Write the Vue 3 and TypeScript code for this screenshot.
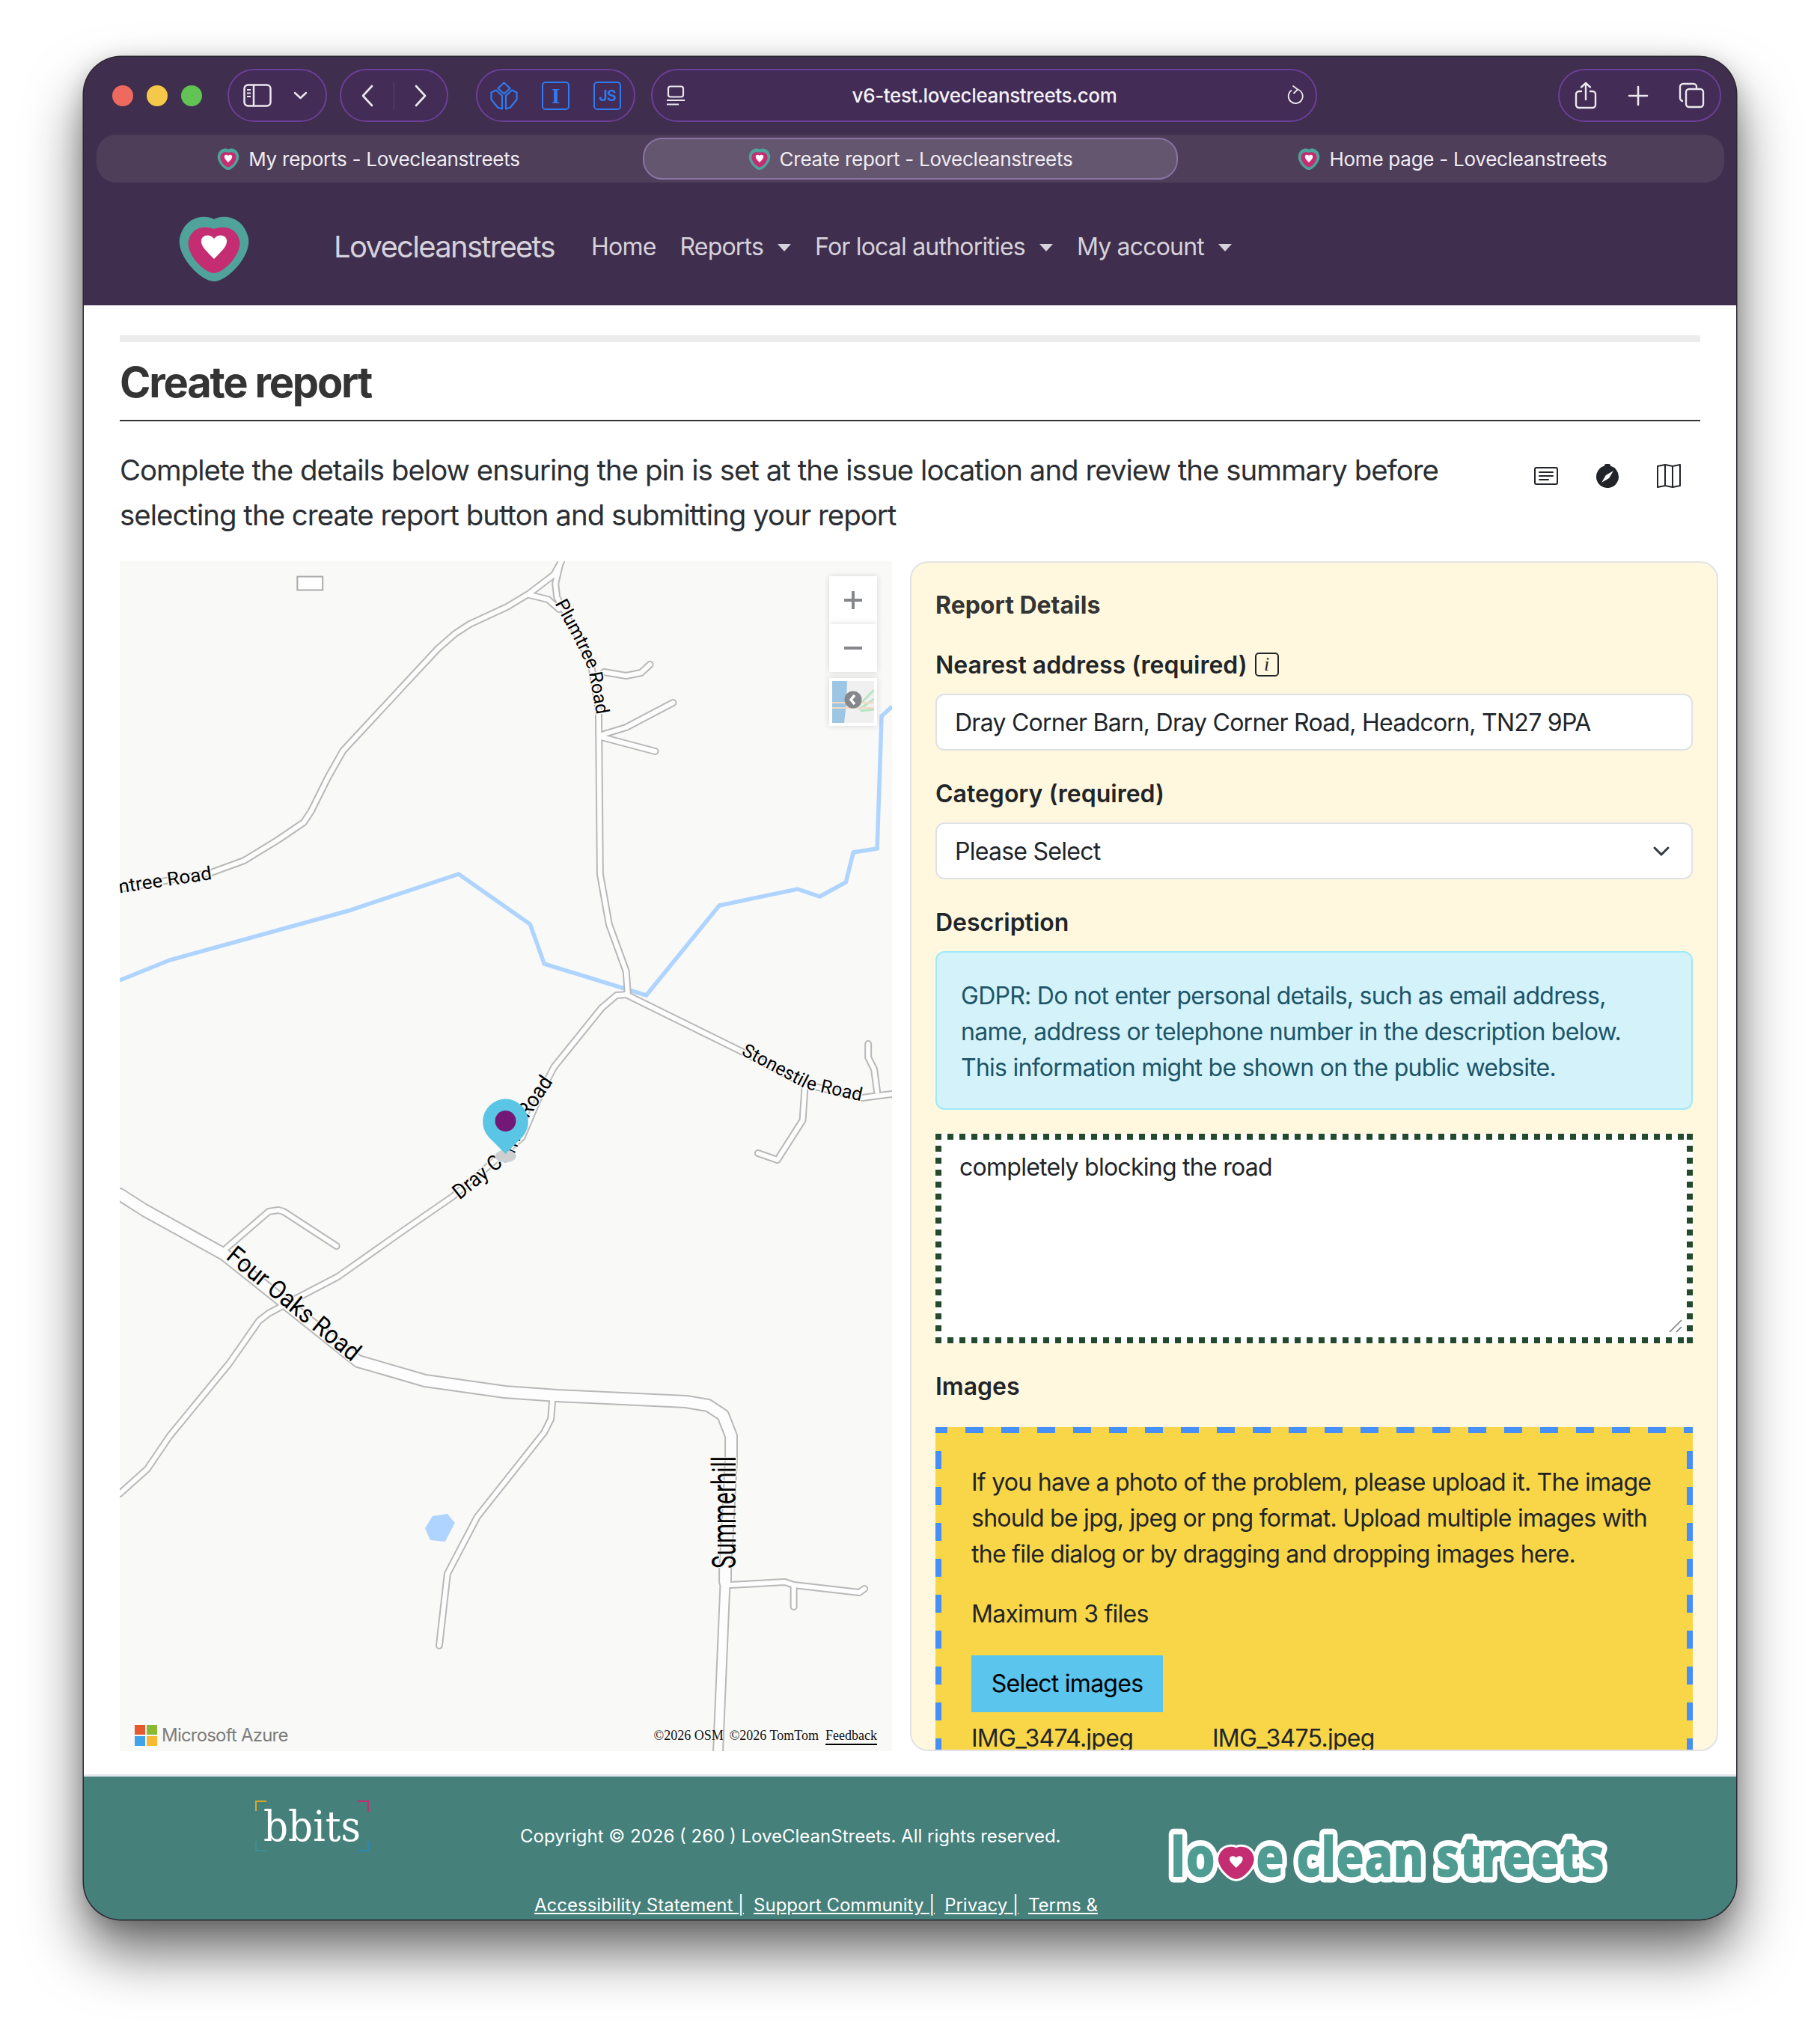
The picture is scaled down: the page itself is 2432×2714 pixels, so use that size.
<script setup lang="ts">
interface Road {
  pts: string
  w: number
}

const tabs = [
  { title: 'My reports - Lovecleanstreets', active: false },
  { title: 'Create report - Lovecleanstreets', active: true },
  { title: 'Home page - Lovecleanstreets', active: false },
]

const navLinks = [
  { label: 'Home', caret: false },
  { label: 'Reports', caret: true },
  { label: 'For local authorities', caret: true },
  { label: 'My account', caret: true },
]

const footerLinks = ['Accessibility Statement |', 'Support Community |', 'Privacy |', 'Terms &']

const heartOuter = 'M47 5C55-1 83-2 90 30c4 24-26 58-43 58S0 54 4 30C11-2 39-1 47 5Z'
const heartInner = 'M47 18c8-4 28-5 32 16 3 18-20 43-32 43S12 52 15 34c4-21 24-20 32-16Z'
const heartWhite = 'M47 58C38 48 31 42 31 34c0-7 10-11 16-3 6-8 16-4 16 3 0 8-7 14-16 24Z'

const roads: Road[] = [
  { pts: '0,438 123,416 167,400 213,372 247,349 257,334 280,288 300,253 427,117 450,97 470,84 520,61 550,43 583,18 593,0', w: 6 },
  { pts: '592,0 585,30 587,48 615,100 633,138 643,199 645,418 657,485 680,548 682,577', w: 6 },
  { pts: '550,45 575,51 590,64', w: 6 },
  { pts: '650,148 680,153 700,149 712,138', w: 6 },
  { pts: '647,232 680,222 743,189', w: 6 },
  { pts: '647,235 719,254', w: 6 },
  { pts: '682,579 667,580 647,597 583,676 567,707 540,770 447,849 380,895 293,956 243,982 200,1005 187,1015 147,1072 67,1169 37,1213 0,1246', w: 6 },
  { pts: '680,579 837,656 920,699 997,717 1020,714 1037,712', w: 6 },
  { pts: '920,702 917,747 883,800 857,791', w: 6 },
  { pts: '1017,709 1013,679 1005,663 1005,645', w: 6 },
  { pts: '0,846 33,867 140,926 320,1069 410,1095 517,1110 587,1115 760,1123 790,1128 810,1141 821,1169 821,1200 813,1349 813,1364', w: 14 },
  { pts: '813,1364 803,1600', w: 11 },
  { pts: '820,1368 893,1364 905,1368 993,1378 1000,1373', w: 6 },
  { pts: '905,1369 905,1397', w: 6 },
  { pts: '581,1120 579,1146 570,1164 480,1277 440,1353 429,1449', w: 6 },
  { pts: '143,918 200,869 213,867 220,869 291,915', w: 6 },
]

const labels = [
  { id: 'lb-plum', d: 'M592 52 L620 104 L638 142 L650 209', text: 'Plumtree Road', size: 25, dy: 9, anchor: 'start', offset: '0', len: 164 },
  { id: 'lb-west', d: 'M-120 452 L123 416', text: 'Plumtree Road', size: 25, dy: 9, anchor: 'end', offset: '100%', len: 172 },
  { id: 'lb-stone', d: 'M838 651 L923 696 L1003 714', text: 'Stonestile Road', size: 25, dy: 9, anchor: 'start', offset: '0', len: 172 },
  { id: 'lb-dray', d: 'M450 846 L520 790 L543 735 L575 688', text: 'Dray Corner Road', size: 28, dy: 10, anchor: 'start', offset: '0', len: 204 },
  { id: 'lb-four', d: 'M149 922 L328 1068', text: 'Four Oaks Road', size: 34, dy: 12, anchor: 'start', offset: '0', len: 220 },
  { id: 'lb-summer', d: 'M827 1346 L827 1190', text: 'Summerhill', size: 44, dy: 0, anchor: 'start', offset: '0', len: 150 },
]
</script>

<template>
  <div class="window">
    <div class="toolbar">
      <div class="lights">
        <span class="light red"></span>
        <span class="light yellow"></span>
        <span class="light green"></span>
      </div>

      <div class="pill pill-side">
        <svg width="38" height="31" viewBox="0 0 38 31" fill="none" stroke="#ece8ee" stroke-width="2.5">
          <rect x="1.5" y="1.5" width="35" height="28" rx="5" />
          <path d="M14 2v27" />
          <path d="M5 8h5M5 12.5h5M5 17h5" stroke-width="2" />
        </svg>
        <svg width="19" height="11" viewBox="0 0 19 11" fill="none" stroke="#ece8ee" stroke-width="2.5" stroke-linecap="round" stroke-linejoin="round">
          <path d="m2 2 7.5 7L17 2" />
        </svg>
      </div>

      <div class="pill pill-nav">
        <svg width="18" height="30" viewBox="0 0 18 30" fill="none" stroke="#ece8ee" stroke-width="2.6" stroke-linecap="round" stroke-linejoin="round">
          <path d="M15 2 3 15l12 13" />
        </svg>
        <span class="pill-divider"></span>
        <svg width="18" height="30" viewBox="0 0 18 30" fill="none" stroke="#ece8ee" stroke-width="2.6" stroke-linecap="round" stroke-linejoin="round">
          <path d="m3 2 12 13L3 28" />
        </svg>
      </div>

      <div class="pill pill-ext">
        <svg width="37" height="38" viewBox="0 0 37 38" fill="none" stroke="#2f7bf0" stroke-width="2.2" stroke-linejoin="round">
          <path d="m18.5 1.5 8 7.5-8 7.5-8-7.5Z" />
          <path d="M1.5 14.5 8 11.5l8 7.5v17.5l-6-2-8.5-10.5ZM35.5 14.5l-6.5-3-8 7.5v17.5l6-2 8.5-10.5Z" />
        </svg>
        <span class="ext-box ext-i">I</span>
        <span class="ext-box ext-js">JS</span>
      </div>

      <div class="pill pill-url">
        <svg class="url-icon" width="24" height="27" viewBox="0 0 24 27" fill="none" stroke="#ece8ee" stroke-width="2.2">
          <rect x="2" y="1.5" width="20" height="14" rx="3" />
          <path d="M0 20h24M0 25.5h16" />
        </svg>
        <span class="url-text">v6-test.lovecleanstreets.com</span>
        <svg class="url-reload" width="22" height="27" viewBox="0 0 22 27" fill="none" stroke="#ece8ee" stroke-width="1.8" stroke-linecap="round" stroke-linejoin="round">
          <path d="M14 5.5a9.5 9.5 0 1 1-8.5 1.5" />
          <path d="m8 1 6 4.5-5 5" />
        </svg>
      </div>

      <div class="pill pill-actions">
        <svg width="30" height="37" viewBox="0 0 30 37" fill="none" stroke="#ece8ee" stroke-width="2.4" stroke-linecap="round" stroke-linejoin="round">
          <path d="M9 13H6a4 4 0 0 0-4 4v14a4 4 0 0 0 4 4h18a4 4 0 0 0 4-4V17a4 4 0 0 0-4-4h-3" />
          <path d="M15 24V2M9 7.5 15 2l6 5.5" />
        </svg>
        <svg width="28" height="28" viewBox="0 0 28 28" fill="none" stroke="#ece8ee" stroke-width="2.6" stroke-linecap="round">
          <path d="M14 2v24M2 14h24" />
        </svg>
        <svg width="35" height="35" viewBox="0 0 35 35" fill="none" stroke="#ece8ee" stroke-width="2.4">
          <path d="M6 25a4 4 0 0 1-4-4V6a4 4 0 0 1 4-4h14a4 4 0 0 1 4 4v3" />
          <rect x="10" y="9" width="23" height="24" rx="4" />
        </svg>
      </div>
    </div>

    <div class="tabbar">
      <div v-for="tab in tabs" :key="tab.title" class="tab" :class="{ active: tab.active }">
        <svg width="30" height="29" viewBox="3 0 88 88">
          <path :d="heartOuter" fill="#4fa39a" />
          <path :d="heartInner" fill="#c42d72" />
          <path :d="heartWhite" fill="#fff" />
        </svg>
        <span>{{ tab.title }}</span>
      </div>
    </div>

    <nav class="navbar">
      <svg class="nav-logo" width="94" height="88" viewBox="3 0 88 88" preserveAspectRatio="none">
        <path :d="heartOuter" fill="#4fa39a" />
        <path :d="heartInner" fill="#c42d72" />
        <path :d="heartWhite" fill="#fff" />
      </svg>
      <span class="brand">Lovecleanstreets</span>
      <ul class="nav-links">
        <li v-for="link in navLinks" :key="link.label">
          {{ link.label }}<i v-if="link.caret" class="caret"></i>
        </li>
      </ul>
    </nav>

    <main class="content">
      <div class="top-rule"></div>
      <h1 class="title">Create report</h1>
      <div class="intro">
        <p>Complete the details below ensuring the pin is set at the issue location and review the summary before selecting the create report button and submitting your report</p>
        <div class="view-icons">
          <svg width="32" height="32" viewBox="0 0 16 16" fill="#212529">
            <path d="M14.5 3a.5.5 0 0 1 .5.5v9a.5.5 0 0 1-.5.5h-13a.5.5 0 0 1-.5-.5v-9a.5.5 0 0 1 .5-.5zm-13-1A1.5 1.5 0 0 0 0 3.5v9A1.5 1.5 0 0 0 1.5 14h13a1.5 1.5 0 0 0 1.5-1.5v-9A1.5 1.5 0 0 0 14.5 2z" />
            <path d="M3 5.5a.5.5 0 0 1 .5-.5h9a.5.5 0 0 1 0 1h-9a.5.5 0 0 1-.5-.5M3 8a.5.5 0 0 1 .5-.5h9a.5.5 0 0 1 0 1h-9A.5.5 0 0 1 3 8m0 2.5a.5.5 0 0 1 .5-.5h6a.5.5 0 0 1 0 1h-6a.5.5 0 0 1-.5-.5" />
          </svg>
          <svg width="32" height="32" viewBox="0 0 16 16" fill="#212529">
            <path d="M15.5 8.516a7.5 7.5 0 1 1-9.462-7.24A1 1 0 0 1 7 0h2a1 1 0 0 1 .962 1.276 7.5 7.5 0 0 1 5.538 7.24m-3.61-3.905L6.94 7.439 4.11 12.39l4.95-2.828 2.828-4.95z" />
          </svg>
          <svg width="32" height="32" viewBox="0 0 16 16" fill="#212529">
            <path fill-rule="evenodd" d="M15.817.113A.5.5 0 0 1 16 .5v14a.5.5 0 0 1-.402.49l-5 1a.5.5 0 0 1-.196 0L5.5 15.01l-4.902.98A.5.5 0 0 1 0 15.5v-14a.5.5 0 0 1 .402-.49l5-1a.5.5 0 0 1 .196 0L10.5.99l4.902-.98a.5.5 0 0 1 .415.103M10 1.91l-4-.8v12.98l4 .8zm1 12.98 4-.8V1.11l-4 .8zm-6-.8V1.11l-4 .8v12.98z" />
          </svg>
        </div>
      </div>

      <div class="report-row">
        <div class="map">
          <svg class="map-canvas" width="1032" height="1590" viewBox="0 0 1037 1590" preserveAspectRatio="none">
            <defs>
              <path v-for="l in labels" :id="l.id" :key="l.id" :d="l.d" />
            </defs>
            <polyline class="river" points="0,560 67,533 307,467 455,418 551,485 570,538 707,580 805,460 910,438 940,448 975,429 985,389 1017,384 1023,207 1037,194" />
            <polygon points="410,1292 420,1276 440,1273 450,1285 437,1310 417,1308" fill="#aed4ff" />
            <rect x="238.5" y="20.5" width="34" height="18" fill="#fff" stroke="#aaa" stroke-width="2" />
            <polyline v-for="(r, i) in roads" :key="'o' + i" class="road-edge" :points="r.pts" :stroke-width="r.w + 4" />
            <polyline v-for="(r, i) in roads" :key="'f' + i" class="road-fill" :points="r.pts" :stroke-width="r.w" />
            <text v-for="l in labels" :key="'t' + l.id" class="road-label" :font-size="l.size" :dy="l.dy" :text-anchor="l.anchor">
              <textPath :href="'#' + l.id" :startOffset="l.offset" :textLength="l.len" lengthAdjust="spacingAndGlyphs">{{ l.text }}</textPath>
            </text>
            <ellipse cx="518" cy="795" rx="14" ry="8" fill="#cfcfcf" stroke="#bfe4ef" />
            <path d="M518 792 L495 769 A30.5 30.5 0 1 1 541 769 Z" fill="#5bc5e5" />
            <circle cx="518" cy="748" r="14" fill="#741877" />
          </svg>

          <div class="map-controls">
            <button class="map-btn">
              <svg width="24" height="24" viewBox="0 0 24 24" stroke="#85878b" stroke-width="4"><path d="M12 0v24M0 12h24" /></svg>
            </button>
            <button class="map-btn">
              <svg width="24" height="24" viewBox="0 0 24 24" stroke="#85878b" stroke-width="4"><path d="M0 12h24" /></svg>
            </button>
            <div class="minimap">
              <svg width="56" height="56" viewBox="0 0 56 56">
                <rect width="56" height="56" fill="#f0f0f0" />
                <path d="M0 0h20l-1 30 -3 26H0Z" fill="#9cc6e4" />
                <path d="M34 34 56 12M36 38 56 24M38 40 56 38" stroke="#b8e4c0" stroke-width="3" fill="none" />
                <path d="M0 29h56M0 36h56" stroke="#f3d9c4" stroke-width="2" fill="none" />
                <circle cx="28" cy="25" r="11.5" fill="#85878b" />
                <path d="m30 19-5 6 5 6" stroke="#fff" stroke-width="3.5" fill="none" />
              </svg>
            </div>
          </div>

          <div class="map-brand">
            <svg width="30" height="28" viewBox="0 0 30 28">
              <rect width="14" height="13" fill="#e8582e" />
              <rect x="16" width="14" height="13" fill="#8ab932" />
              <rect y="15" width="14" height="13" fill="#3ea3ea" />
              <rect x="16" y="15" width="14" height="13" fill="#f9b930" />
            </svg>
            <span>Microsoft Azure</span>
          </div>
          <div class="map-credits">
            <span>©2026 OSM</span>
            <span>©2026 TomTom</span>
            <a>Feedback</a>
          </div>
        </div>

        <section class="panel">
          <h5 class="panel-title">Report Details</h5>
          <label class="field-label">Nearest address (required) <span class="info-box">i</span></label>
          <div class="control">Dray Corner Barn, Dray Corner Road, Headcorn, TN27 9PA</div>

          <label class="field-label">Category (required)</label>
          <div class="control select">
            Please Select
            <svg width="32" height="32" viewBox="0 0 16 16" fill="none" stroke="#343a40" stroke-width="1.5" stroke-linecap="round" stroke-linejoin="round">
              <path d="m3.5 6 4.5 4.5L12.5 6" />
            </svg>
          </div>

          <label class="field-label">Description</label>
          <div class="gdpr">GDPR: Do not enter personal details, such as email address, name, address or telephone number in the description below. This information might be shown on the public website.</div>

          <div class="desc">
            <div class="desc-inner">
              completely blocking the road
              <svg class="resize-grip" width="18" height="18" viewBox="0 0 18 18" stroke="#777" stroke-width="1.5">
                <path d="M1 17 17 1M10 17l7-7" />
              </svg>
            </div>
          </div>

          <label class="field-label images-label">Images</label>
          <div class="dropzone">
            <p class="drop-text">If you have a photo of the problem, please upload it. The image should be jpg, jpeg or png format. Upload multiple images with the file dialog or by dragging and dropping images here.</p>
            <p class="drop-max">Maximum 3 files</p>
            <button class="select-btn">Select images</button>
            <div class="file-list">
              <span>IMG_3474.jpeg</span>
              <span>IMG_3475.jpeg</span>
            </div>
          </div>
        </section>
      </div>
    </main>

    <footer class="footer">
      <svg class="bbits" width="152" height="68" viewBox="0 0 152 68" fill="none" stroke-width="2">
        <path d="M1 14V1h14" stroke="#d9a829" />
        <path d="M137 1h14v14" stroke="#c42d72" />
        <path d="M1 54v13h14" stroke="#3e8f95" />
        <path d="M137 67h14V54" stroke="#2f86b8" />
        <text x="11" y="54" class="bbits-text" textLength="130" lengthAdjust="spacingAndGlyphs">bbits</text>
      </svg>
      <div class="footer-mid">
        <div class="copyright">Copyright © 2026 ( 260 ) LoveCleanStreets. All rights reserved.</div>
        <div class="footer-links">
          <a v-for="link in footerLinks" :key="link">{{ link }}</a>
        </div>
      </div>
      <svg class="lcs-logo" width="598" height="79" viewBox="0 0 598 79">
        <text x="10" y="66" class="lcs-text" textLength="60" lengthAdjust="spacingAndGlyphs">lo</text>
        <text x="124" y="66" class="lcs-text" textLength="466" lengthAdjust="spacingAndGlyphs">e clean streets</text>
        <g transform="translate(72 25) scale(.55 .5)">
          <path :d="heartOuter" fill="#c42d72" stroke="#fff" stroke-width="12" paint-order="stroke" />
          <path :d="heartWhite" fill="#fff" />
        </g>
      </svg>
    </footer>
  </div>
</template>

<style>
html, body {
  margin: 0;
  background: #fff;
}
</style>

<style scoped>
.window {
  box-sizing: border-box;
  width: 2208px;
  height: 2489px;
  margin: 76px 0 149px 112px;
  border-radius: 50px;
  overflow: hidden;
  background: #3f2e4d;
  display: flex;
  flex-direction: column;
  font-family: Inter, "Liberation Sans", sans-serif;
  color: #212529;
  box-shadow: 0 0 0 1.5px #2c2730, 0 44px 76px rgba(0, 0, 0, 0.58), 0 6px 30px rgba(0, 0, 0, 0.2);
}

.toolbar {
  height: 104px;
  flex-shrink: 0;
  box-sizing: border-box;
  padding: 16px 20px 0 38px;
  display: flex;
  align-items: flex-start;
}

.lights {
  display: flex;
  gap: 18px;
  margin-top: 22px;
  margin-right: 34px;
}

.light {
  width: 28px;
  height: 28px;
  border-radius: 50%;
}
.light.red { background: #ee6a5f; }
.light.yellow { background: #f5c84a; }
.light.green { background: #61c354; }

.pill {
  height: 71px;
  box-sizing: border-box;
  border: 2px solid #6b3f98;
  border-radius: 36px;
  background: #432c56;
  display: flex;
  align-items: center;
}

.pill-side {
  width: 133px;
  padding: 0 24px 0 19px;
  justify-content: space-between;
  margin-right: 17px;
}

.pill-nav {
  width: 145px;
  padding: 0 26px;
  justify-content: space-between;
  margin-right: 37px;
}

.pill-divider {
  width: 1px;
  height: 38px;
  background: #5c4a70;
}

.pill-ext {
  width: 213px;
  padding: 0 17px;
  justify-content: space-between;
  margin-right: 21px;
}

.ext-box {
  width: 37px;
  height: 38px;
  box-sizing: border-box;
  border: 2px solid #2f7bf0;
  border-radius: 5px;
  color: #2f7bf0;
  display: flex;
  align-items: center;
  justify-content: center;
}

.ext-i {
  font-family: "Liberation Serif", serif;
  font-size: 30px;
  font-weight: 700;
}

.ext-js {
  font-size: 20px;
  font-weight: 600;
  letter-spacing: -1px;
}

.pill-url {
  width: 890px;
  padding: 0 16px 0 19px;
  justify-content: space-between;
}

.url-text {
  font-size: 26px;
  color: #f4f1f6;
  margin-left: -4px;
  font-weight: 500;
  letter-spacing: -0.37px;
}

.pill-actions {
  width: 218px;
  margin-left: auto;
  padding: 0 20px;
  justify-content: space-between;
}

.tabbar {
  margin: 0 16px 0 17px;
  height: 64px;
  flex-shrink: 0;
  border-radius: 26px;
  background: #4e3e5a;
  display: grid;
  grid-template-columns: 730px 715px 730px;
}

.tab {
  display: flex;
  align-items: center;
  justify-content: center;
  gap: 12px;
  font-size: 26px;
  letter-spacing: -0.25px;
  color: #efecf1;
  border-radius: 26px;
}

.tab:first-child {
  padding-right: 3px;
}

.tab:last-child {
  padding-left: 4px;
}

.tab.active {
  margin: 4px 0;
  box-sizing: border-box;
  background: #65566f;
  border: 2px solid #8a73a3;
}

.navbar {
  flex-shrink: 0;
  height: 164px;
  box-sizing: border-box;
  display: flex;
  align-items: center;
  padding: 6px 0 0 127px;
}

.nav-logo {
  margin-right: 113px;
  margin-top: 6px;
}

.brand {
  font-size: 40px;
  letter-spacing: -1.7px;
  color: #d6d1da;
  margin-right: 49px;
}

.nav-links {
  list-style: none;
  margin: 0;
  padding: 0;
  display: flex;
  gap: 32px;
  font-size: 32px;
  letter-spacing: -0.8px;
  color: #d6d1da;
}

.caret {
  display: inline-block;
  margin-left: 19px;
  vertical-align: 5px;
  border-top: 10px solid currentColor;
  border-left: 9px solid transparent;
  border-right: 9px solid transparent;
}

.content {
  flex: 1;
  box-sizing: border-box;
  padding: 40px 24px 0 48px;
  min-height: 0;
  background: #fff;
}

.top-rule {
  height: 9px;
  margin-right: 24px;
  background: #ececec;
}

.title {
  margin: 0 24px 0 0;
  height: 106px;
  box-sizing: border-box;
  padding-top: 22px;
  border-bottom: 2px solid #333;
  font-size: 56px;
  line-height: 64px;
  font-weight: 700;
  letter-spacing: -2.2px;
  color: #343434;
}

.intro {
  display: flex;
  justify-content: space-between;
  margin: 35px 24px 0 0;
  height: 122px;
}

.intro p {
  margin: 0;
  width: 1860px;
  font-size: 38.4px;
  line-height: 60px;
  letter-spacing: -0.98px;
  color: #2b2f33;
}

.view-icons {
  display: flex;
  gap: 50px;
  padding: 22px 26px 0 0;
  align-items: flex-start;
}

.report-row {
  display: flex;
  gap: 24px;
  margin-top: 30px;
  margin-right: -24px;
  height: 1590px;
}

.map {
  position: relative;
  width: 1032px;
  height: 1590px;
  background: #f9f9f7;
  overflow: hidden;
  flex-shrink: 0;
}

.map-canvas {
  display: block;
}

.river {
  fill: none;
  stroke: #aed4ff;
  stroke-width: 5.5;
  stroke-linejoin: miter;
}

.road-edge,
.road-fill {
  fill: none;
  stroke-linecap: round;
  stroke-linejoin: round;
}

.road-edge { stroke: #b8b8b8; }
.road-fill { stroke: #fdfdfd; }

.road-label {
  font-family: Roboto, "Liberation Sans", sans-serif;
  fill: #000;
  stroke: #f9f9f7;
  stroke-width: 3px;
  paint-order: stroke;
}

.map-controls {
  position: absolute;
  top: 20px;
  right: 20px;
  width: 64px;
}

.map-btn {
  display: flex;
  align-items: center;
  justify-content: center;
  width: 64px;
  height: 64px;
  padding: 0;
  border: none;
  background: #fff;
  box-shadow: 0 0 8px rgba(0, 0, 0, 0.14);
}

.minimap {
  margin-top: 8px;
  width: 64px;
  height: 64px;
  box-sizing: border-box;
  padding: 4px;
  background: #fff;
  box-shadow: 0 0 8px rgba(0, 0, 0, 0.14);
}

.minimap svg {
  display: block;
}

.map-brand {
  position: absolute;
  left: 20px;
  bottom: 7px;
  display: flex;
  align-items: center;
  gap: 6px;
  font-size: 24px;
  color: #7d7d7d;
  letter-spacing: -0.8px;
}

.map-credits {
  position: absolute;
  right: 20px;
  bottom: 8px;
  display: flex;
  gap: 8px;
  font-family: "Liberation Serif", serif;
  font-size: 18px;
  color: #111;
}

.map-credits a {
  border-bottom: 2px solid #000;
  margin-left: 1px;
}

.panel {
  width: 1080px;
  height: 1590px;
  box-sizing: border-box;
  border: 2px solid #e2e2e6;
  border-radius: 24px;
  background: #fff8de;
  padding: 38px 32px 0;
  overflow: hidden;
  font-size: 32px;
  flex-shrink: 0;
}

.panel-title {
  margin: 0 0 41px;
  font-size: 32px;
  line-height: 38px;
  font-weight: 700;
  color: #343434;
}

.field-label {
  display: flex;
  align-items: center;
  gap: 10px;
  height: 38px;
  margin-bottom: 20px;
  font-weight: 600;
  font-size: 32px;
  color: #212529;
}

.info-box {
  width: 32px;
  height: 32px;
  box-sizing: border-box;
  border: 2px solid #212529;
  border-radius: 5px;
  font-family: "Liberation Serif", serif;
  font-style: italic;
  font-weight: 400;
  font-size: 26px;
  display: flex;
  align-items: center;
  justify-content: center;
}

.control {
  height: 76px;
  box-sizing: border-box;
  border: 2px solid #dee2e6;
  border-radius: 12px;
  background: #fff;
  padding: 0 24px;
  display: flex;
  align-items: center;
  justify-content: space-between;
  margin-bottom: 38px;
  color: #212529;
  letter-spacing: -0.74px;
}

.gdpr {
  height: 212px;
  box-sizing: border-box;
  border: 2px solid #9eeaf9;
  border-radius: 12px;
  background: #d3f2fa;
  color: #1d5568;
  padding: 34px 32px 0;
  line-height: 48px;
  letter-spacing: -0.74px;
  margin-bottom: 32px;
}

.desc {
  height: 280px;
  padding: 8px;
  box-sizing: border-box;
  background-color: #fff;
  background-image:
    repeating-linear-gradient(90deg, #234a2c 0 8px, transparent 8px 16px),
    repeating-linear-gradient(90deg, #234a2c 0 8px, transparent 8px 16px),
    repeating-linear-gradient(0deg, #234a2c 0 8px, transparent 8px 16px),
    repeating-linear-gradient(0deg, #234a2c 0 8px, transparent 8px 16px);
  background-size: 100% 8px, 100% 8px, 8px 100%, 8px 100%;
  background-position: 0 0, 0 100%, 0 0, 100% 0;
  background-repeat: no-repeat;
  margin-bottom: 38px;
}

.desc-inner {
  position: relative;
  height: 100%;
  box-sizing: border-box;
  padding: 13px 24px;
  line-height: 48px;
  letter-spacing: -0.74px;
  background: #fff;
}

.resize-grip {
  position: absolute;
  right: 6px;
  bottom: 6px;
}

.images-label {
  margin-bottom: 36px;
}

.dropzone {
  box-sizing: border-box;
  height: 440px;
  padding: 50px 48px 0;
  background-color: #f9d648;
  background-image:
    repeating-linear-gradient(90deg, #468ef8 -8px 16px, transparent 16px 40px),
    repeating-linear-gradient(0deg, #468ef8 0 24px, transparent 24px 48px),
    repeating-linear-gradient(0deg, #468ef8 0 24px, transparent 24px 48px);
  background-size: 100% 8px, 8px 100%, 8px 100%;
  background-position: 0 0, 0 0, 100% 0;
  background-repeat: no-repeat;
  line-height: 48px;
  letter-spacing: -0.74px;
  color: #212529;
}

.drop-text {
  margin: 0 0 32px;
}

.drop-max {
  margin: 0 0 31px;
}

.select-btn {
  display: block;
  width: 256px;
  height: 76px;
  padding: 0;
  border: none;
  background: #5bc5ee;
  color: #000;
  font: inherit;
  letter-spacing: -0.74px;
}

.file-list {
  display: flex;
  margin-top: 11px;
}

.file-list span {
  width: 322px;
}

.footer {
  flex: none;
  height: 194px;
  box-sizing: border-box;
  border-top: 3px solid #e4e8ec;
  background: #45807a;
  display: flex;
  align-items: flex-start;
  padding-left: 229px;
  overflow: hidden;
  color: #fff;
}

.bbits {
  margin-top: 32px;
  margin-right: 202px;
}

.bbits-text {
  font-family: "DejaVu Serif", serif;
  font-size: 56px;
  fill: #fff;
}

.footer-mid {
  width: 859px;
  padding-top: 62px;
  font-size: 24px;
  line-height: 36px;
}

.footer-links {
  display: flex;
  gap: 13px;
  margin-top: 56px;
  margin-left: 19px;
  white-space: nowrap;
}

.footer-links a {
  text-decoration: underline;
}

.lcs-logo {
  margin-top: 68px;
}

.lcs-text {
  font-family: "Open Sans", sans-serif;
  font-weight: 800;
  font-size: 74px;
  fill: #4f9c93;
  stroke: #fff;
  stroke-width: 15px;
  stroke-linejoin: round;
  paint-order: stroke;
}
</style>
